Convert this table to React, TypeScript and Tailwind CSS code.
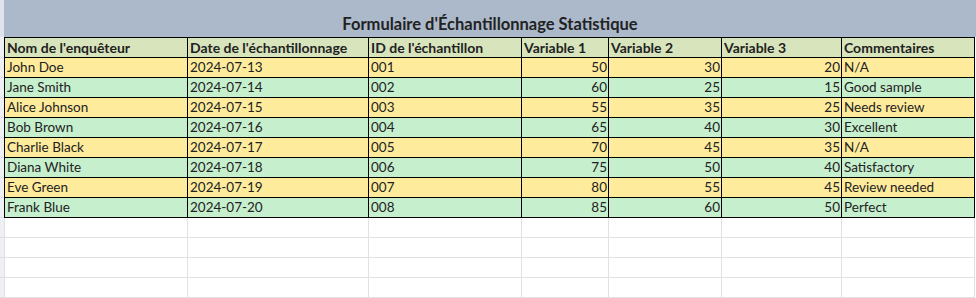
const COLS = [
  { w: 'w-[184px]', num: false },
  { w: 'w-[181px]', num: false },
  { w: 'w-[153px]', num: false },
  { w: 'w-[87px]', num: true },
  { w: 'w-[113px]', num: true },
  { w: 'w-[120px]', num: true },
  { w: 'w-[133px]', num: false },
];

const HEADERS = [
  "Nom de l'enquêteur",
  "Date de l'échantillonnage",
  "ID de l'échantillon",
  'Variable 1',
  'Variable 2',
  'Variable 3',
  'Commentaires',
];

const ROWS = [
  ['John Doe', '2024-07-13', '001', '50', '30', '20', 'N/A'],
  ['Jane Smith', '2024-07-14', '002', '60', '25', '15', 'Good sample'],
  ['Alice Johnson', '2024-07-15', '003', '55', '35', '25', 'Needs review'],
  ['Bob Brown', '2024-07-16', '004', '65', '40', '30', 'Excellent'],
  ['Charlie Black', '2024-07-17', '005', '70', '45', '35', 'N/A'],
  ['Diana White', '2024-07-18', '006', '75', '50', '40', 'Satisfactory'],
  ['Eve Green', '2024-07-19', '007', '80', '55', '45', 'Review needed'],
  ['Frank Blue', '2024-07-20', '008', '85', '60', '50', 'Perfect'],
];

function Strip({ h }: { h: string }) {
  return <div className={`w-[4px] shrink-0 bg-[#eef0f3] border-b border-[#dcdfe4] ${h}`} />;
}

export default function App() {
  return (
    <div
      className="w-[976px] h-[298px] overflow-hidden bg-white text-[#222]"
      style={{ fontFamily: 'Lato, "Open Sans", sans-serif' }}
    >
      {/* title band */}
      <div className="flex h-[37px]">
        <div className="w-[4px] shrink-0 bg-[#dfe4ec]" />
        <div className="flex-1 bg-[#acb9ca] flex items-end justify-center pb-[5px]">
          <span className="text-[16.5px] font-bold leading-none">Formulaire d'Échantillonnage Statistique</span>
        </div>
      </div>

      {/* header row */}
      <div className="flex h-[21px]">
        <Strip h="h-[21px]" />
        {HEADERS.map((t, i) => (
          <div
            key={t}
            className={`${COLS[i].w} shrink-0 h-[21px] bg-[#d8e4bc] border-t border-b border-r border-black ${
              i === 0 ? 'border-l' : ''
            } flex items-center px-[2px] text-[14px] font-bold leading-none whitespace-nowrap overflow-hidden`}
          >
            {t}
          </div>
        ))}
      </div>

      {/* data rows */}
      {ROWS.map((r, ri) => (
        <div key={ri} className="flex h-[20px]">
          <Strip h="h-[20px]" />
          {r.map((t, i) => (
            <div
              key={i}
              className={`${COLS[i].w} shrink-0 h-[20px] ${
                ri % 2 === 0 ? 'bg-[#ffeb9c]' : 'bg-[#c6efce]'
              } border-b border-r border-black ${i === 0 ? 'border-l' : ''} flex items-center text-[13.5px] leading-none whitespace-nowrap overflow-hidden ${
                COLS[i].num ? 'justify-end pr-[1px]' : 'px-[2px]'
              }`}
            >
              {t}
            </div>
          ))}
        </div>
      ))}

      {/* empty rows */}
      {[0, 1, 2, 3].map((k) => (
        <div key={k} className="flex h-[20px]">
          <Strip h="h-[20px]" />
          {COLS.map((c, i) => (
            <div
              key={i}
              className={`${c.w} shrink-0 h-[20px] border-b border-r border-[#e1e1e1] ${i === 0 ? 'border-l' : ''}`}
            />
          ))}
        </div>
      ))}
    </div>
  );
}
